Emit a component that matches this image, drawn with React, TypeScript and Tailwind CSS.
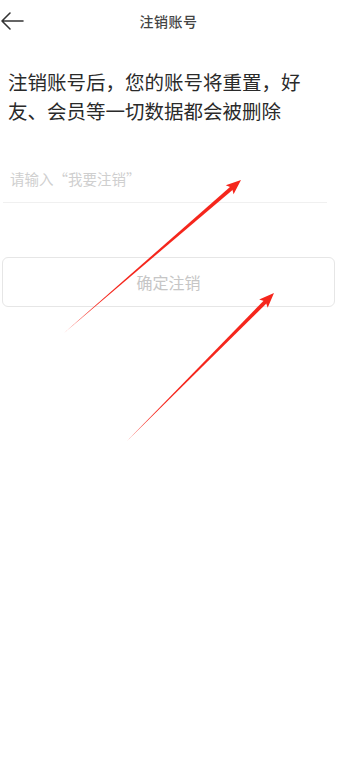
import React from "react";

const font = { fontFamily: '"Noto Sans CJK SC", "Noto Sans", sans-serif' };

function Arrow({ x1, y1, x2, y2 }: { x1: number; y1: number; x2: number; y2: number }) {
    const dx = x2 - x1;
    const dy = y2 - y1;
    const len = Math.hypot(dx, dy);
    const ux = dx / len;
    const uy = dy / len;
    const px = -uy;
    const py = ux;
    const headLen = 15;
    const headW = 6;
    const bx = x2 - ux * headLen;
    const by = y2 - uy * headLen;
    const shaftW = 2;
    const shaft = `${x1},${y1} ${bx + px * shaftW + ux * 4},${by + py * shaftW + uy * 4} ${bx - px * shaftW + ux * 4},${by - py * shaftW + uy * 4}`;
    const head = `${x2},${y2} ${bx + px * headW},${by + py * headW} ${bx + ux * 3},${by + uy * 3} ${bx - px * headW},${by - py * headW}`;
    return (
        <>
            <polygon points={shaft} fill="#f5261c" />
            <polygon points={head} fill="#f5261c" />
        </>
    );
}

export default function App() {
    return (
        <div className="relative w-[337px] h-[760px] bg-white overflow-hidden" style={font}>
            {/* Header */}
            <div className="relative flex items-center justify-center h-[42px]">
                <svg className="absolute left-0 top-[11px]" width="24" height="20" viewBox="0 0 24 20" fill="none">
                    <path d="M23 10H2M10 2L2 10l8 8" stroke="#333" strokeWidth="1.6" strokeLinecap="round" strokeLinejoin="round" />
                </svg>
                <h1 className="text-[14px] font-medium text-[#444] tracking-[0.5px]">注销账号</h1>
            </div>

            {/* Notice */}
            <p className="mt-[25px] px-[8px] text-[19.5px] leading-[29px] text-[#2a2a2a]">
                注销账号后，您的账号将重置，好友、会员等一切数据都会被删除
            </p>

            {/* Input */}
            <div className="mt-[41px] mx-[3px] w-[324px] border-b border-[#f0f0f0] pb-[11px] pl-[7px]">
                <span className="text-[14.5px] leading-[24px] text-[#cfcfcf]">请输入“我要注销”</span>
            </div>

            {/* Button */}
            <div className="mt-[54px] mx-[2px] h-[50px] flex items-center justify-center rounded-[6px] border border-[#e6e6e6]">
                <span className="text-[16px] text-[#c6c6c6]">确定注销</span>
            </div>

            {/* Annotation arrows */}
            <svg className="absolute left-0 top-0 pointer-events-none" width="337" height="760">
                <Arrow x1={64} y1={333} x2={241} y2={180} />
                <Arrow x1={126} y1={442} x2={274} y2={293} />
            </svg>
        </div>
    );
}
